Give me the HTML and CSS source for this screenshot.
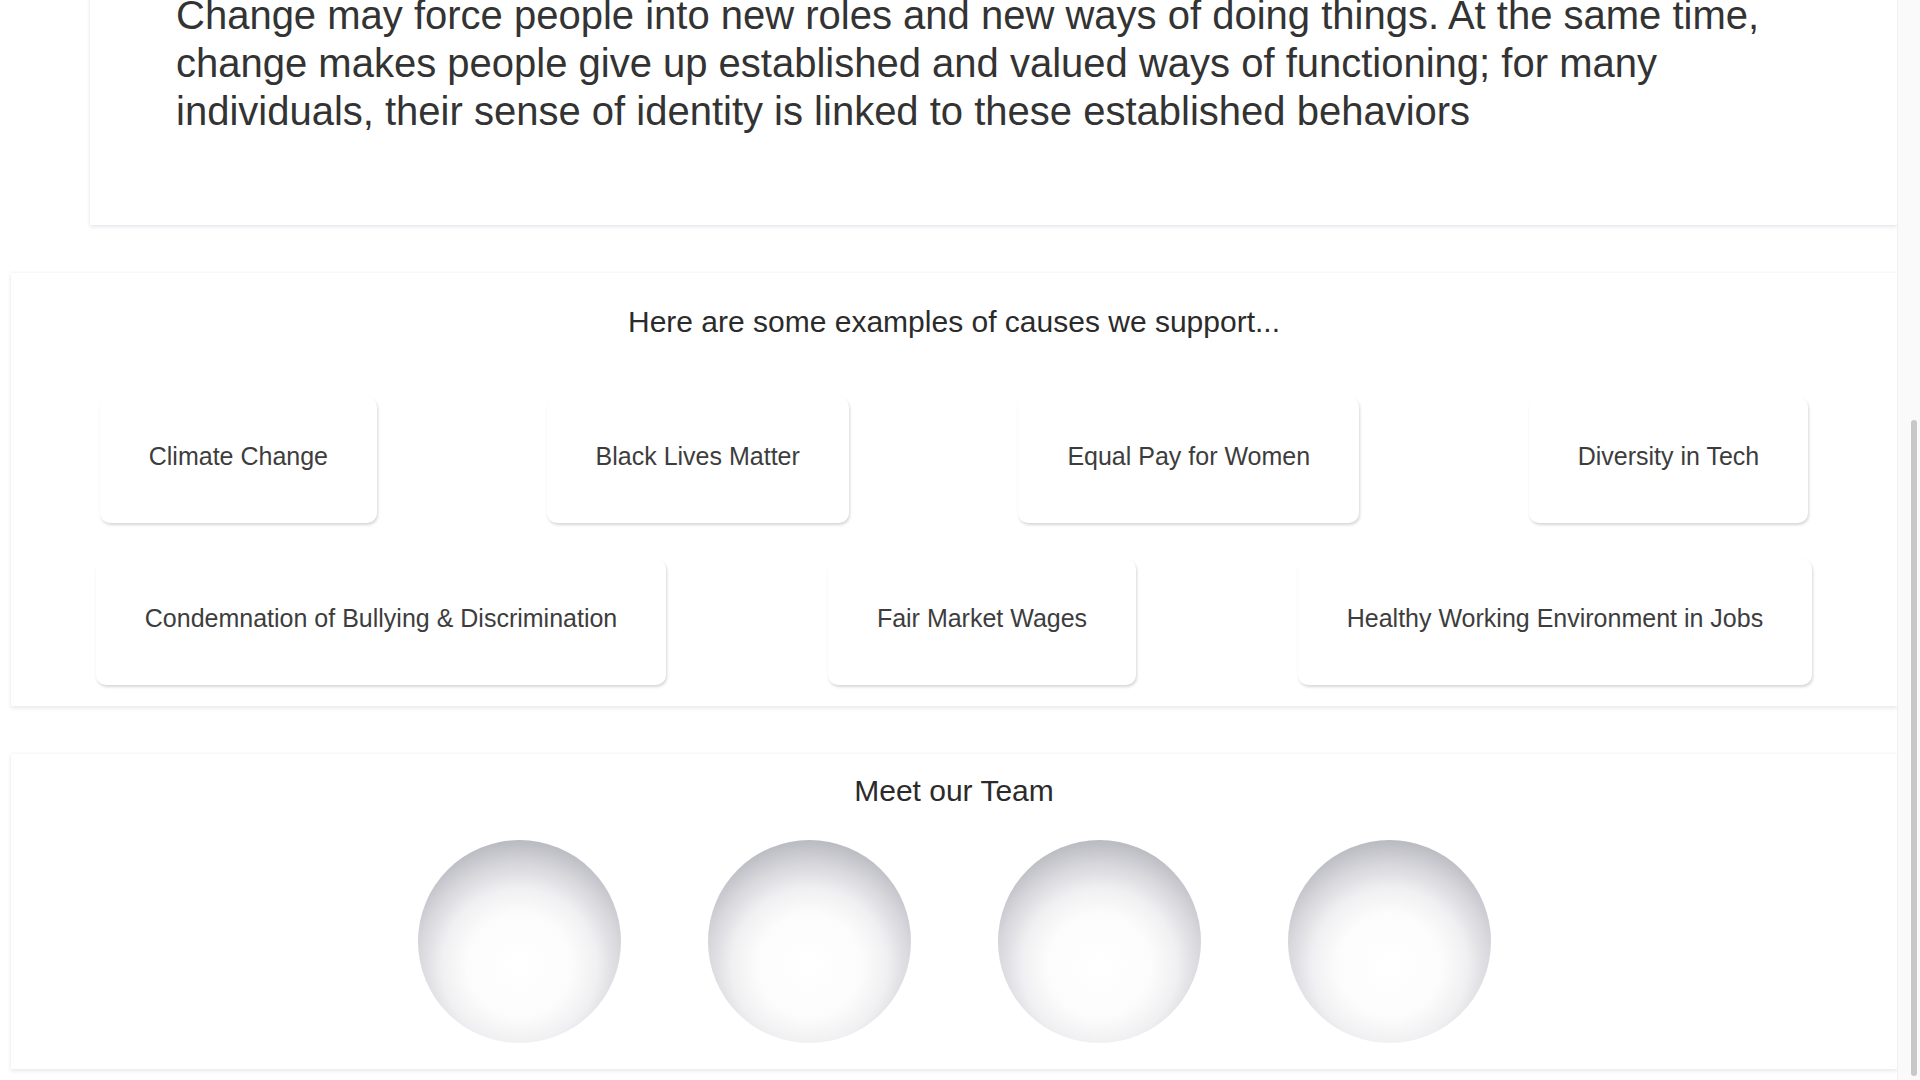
FILE: index.html
```html
<!DOCTYPE html>
<html lang="en">
<head>
<meta charset="utf-8">
<title>Causes we support</title>
<link rel="stylesheet" href="styles.css">
</head>
<body>
<div class="page">
  <main class="content">
    <section class="intro">
      <p>Change may force people into new roles and new ways of doing things. At the same time, change makes people give up established and valued ways of functioning; for many individuals, their sense of identity is linked to these established behaviors</p>
    </section>

    <section class="panel causes">
      <h2>Here are some examples of causes we support...</h2>
      <div class="row row-first">
        <div class="cause">Climate Change</div>
        <div class="cause">Black Lives Matter</div>
        <div class="cause">Equal Pay for Women</div>
        <div class="cause">Diversity in Tech</div>
      </div>
      <div class="row row-second">
        <div class="cause">Condemnation of Bullying &amp; Discrimination</div>
        <div class="cause">Fair Market Wages</div>
        <div class="cause">Healthy Working Environment in Jobs</div>
      </div>
    </section>

    <section class="panel team">
      <h2>Meet our Team</h2>
      <div class="members">
        <div class="avatar"></div>
        <div class="avatar"></div>
        <div class="avatar"></div>
        <div class="avatar"></div>
      </div>
    </section>
  </main>
  <div class="scrollbar"><div class="thumb"></div></div>
</div>
</body>
</html>
```

FILE: styles.css
```css
html, body {
  margin: 0;
  padding: 0;
  height: 1080px;
  overflow: hidden;
  background: #ffffff;
}

body {
  font-family: "Liberation Sans", Arial, Helvetica, sans-serif;
  color: #333333;
}

.page {
  display: flex;
  height: 1080px;
  overflow: hidden;
}

.content {
  flex: 1;
  min-width: 0;
  padding-left: 11px;
  overflow: hidden;
}

.intro {
  margin: -49px 0 0 79px;
  padding: 40px 36px 90px 86px;
  background: #ffffff;
  box-shadow: 0 2px 4px rgba(60, 64, 110, 0.12), 0 0 1px rgba(60, 64, 110, 0.08);
}

.intro p {
  margin: 0;
  font-size: 40px;
  line-height: 48px;
  color: #333333;
}

.panel {
  margin-top: 48px;
  background: #ffffff;
  box-shadow: 0 2px 4px rgba(60, 64, 110, 0.12), 0 -1px 2px rgba(60, 64, 110, 0.04);
}

.panel h2 {
  margin: 0;
  font-size: 30px;
  line-height: 33px;
  font-weight: 500;
  text-align: center;
  color: #2b2b2b;
}

.causes {
  padding: 32px 4px 21px;
}

.row {
  display: flex;
  justify-content: space-around;
}

.row-first {
  margin-top: 59px;
}

.row-second {
  margin-top: 36px;
}

.cause {
  padding: 41px 49px 49px;
  font-size: 25px;
  line-height: 36px;
  color: #3d3d3d;
  background: #ffffff;
  border-radius: 10px;
  box-shadow: 1px 2px 3px rgba(0, 0, 0, 0.16);
  white-space: nowrap;
}

.team {
  padding: 20px 0 26px;
}

.members {
  margin-top: 33px;
  display: flex;
  justify-content: center;
  gap: 87px;
}

.avatar {
  width: 203px;
  height: 203px;
  border-radius: 50%;
  background: radial-gradient(circle farthest-corner at 50% 62%,
    #ffffff 0%,
    #fcfcfc 32%,
    #f0f0f2 48%,
    #d8d8dd 62%,
    #b5b6bd 80%);
}

.scrollbar {
  width: 6px;
  flex: 0 0 auto;
  display: flex;
  padding: 420px 3px 4px 13px;
  background: #fafafb;
  border-left: 1px solid #eef0f4;
}

.thumb {
  flex: 1;
  width: 6px;
  background: #c8c8c8;
  border-radius: 3px;
}
```
